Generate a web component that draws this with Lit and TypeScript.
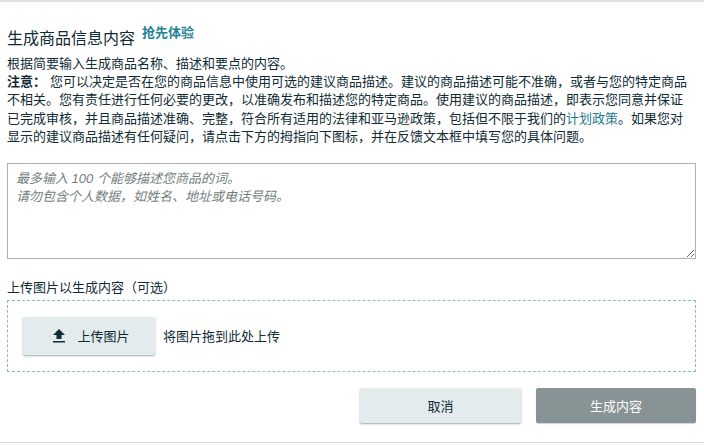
import { LitElement, html, css } from "lit";
import { customElement } from "lit/decorators.js";

@customElement("app-root")
export class AppRoot extends LitElement {
  static styles = css`
    :host {
      display: block;
      height: 446px;
      box-sizing: border-box;
      overflow: hidden;
      background: #fff;
      font-family: "Liberation Sans", "Noto Sans CJK SC", sans-serif;
      font-size: 13px;
      color: #0f2b33;
    }
    .panel {
      box-sizing: border-box;
      height: 443px;
      border-top: 2px solid #e0e0e0;
      border-bottom: 1px solid #dcdcdc;
      padding: 24px 8px 0 7px;
    }
    .heading {
      display: flex;
      align-items: flex-start;
      gap: 7px;
      height: 29px;
    }
    .title {
      font-size: 16px;
      line-height: 22px;
      margin-top: 2px;
      font-weight: 400;
    }
    .badge {
      font-size: 13px;
      line-height: 13px;
      font-weight: 700;
      color: #1f8398;
    }
    .intro {
      margin: 0;
      line-height: 18.2px;
      width: 687px;
    }
    .intro b {
      margin-right: 4px;
    }
    .intro a {
      color: #1f7a8c;
      text-decoration: none;
    }
    textarea {
      display: block;
      box-sizing: border-box;
      width: 689px;
      height: 96px;
      margin: 17px 0 0;
      padding: 6px 8px;
      border: 1px solid #adb1b1;
      border-radius: 0;
      outline: none;
      font: italic 13px/18.4px "Liberation Sans", "Noto Sans CJK SC", sans-serif;
    }
    textarea::placeholder {
      color: #747e80;
      opacity: 1;
    }
    .label {
      margin: 20px 0 3px;
      line-height: 18px;
    }
    .drop {
      box-sizing: border-box;
      display: flex;
      align-items: center;
      gap: 8px;
      height: 72px;
      padding: 0 15px 1px;
      border: 1px dashed #8cbfc0;
    }
    button {
      box-sizing: border-box;
      border: none;
      border-radius: 2px;
      font: inherit;
      cursor: pointer;
    }
    .upload,
    .cancel {
      background: #e3ebec;
      color: #0f2b33;
      box-shadow: 0 1px 2px rgba(15, 43, 51, 0.4);
    }
    .upload {
      display: flex;
      align-items: center;
      justify-content: center;
      gap: 12px;
      width: 132px;
      height: 38px;
      padding-left: 11px;
    }
    .upload svg {
      display: block;
    }
    .actions {
      display: flex;
      justify-content: flex-end;
      gap: 15px;
      margin-top: 16px;
    }
    .cancel,
    .generate {
      height: 35px;
    }
    .cancel {
      width: 161px;
    }
    .generate {
      width: 160px;
      background: #879394;
      color: #fff;
      box-shadow: 0 1px 1px rgba(15, 43, 51, 0.2);
    }
  `;

  render() {
    return html`
      <div class="panel">
        <div class="heading">
          <span class="title">生成商品信息内容</span>
          <span class="badge">抢先体验</span>
        </div>
        <p class="intro">
          根据简要输入生成商品名称、描述和要点的内容。<br />
          <b>注意：</b>您可以决定是否在您的商品信息中使用可选的建议商品描述。建议的商品描述可能不准确，或者与您的特定商品不相关。您有责任进行任何必要的更改，以准确发布和描述您的特定商品。使用建议的商品描述，即表示您同意并保证已完成审核，并且商品描述准确、完整，符合所有适用的法律和亚马逊政策，包括但不限于我们的<a href="#">计划政策</a>。如果您对显示的建议商品描述有任何疑问，请点击下方的拇指向下图标，并在反馈文本框中填写您的具体问题。
        </p>
        <textarea
          placeholder="最多输入 100 个能够描述您商品的词。&#10;请勿包含个人数据，如姓名、地址或电话号码。"
        ></textarea>
        <div class="label">上传图片以生成内容（可选）</div>
        <div class="drop">
          <button class="upload">
            <svg width="12" height="14" viewBox="0 0 12 14" fill="#0f2b33">
              <path d="M6 0 L12 6 H8.5 V10 H3.5 V6 H0 Z" />
              <rect y="12" width="12" height="1.5" />
            </svg>
            上传图片
          </button>
          <span>将图片拖到此处上传</span>
        </div>
        <div class="actions">
          <button class="cancel">取消</button>
          <button class="generate">生成内容</button>
        </div>
      </div>
    `;
  }
}
